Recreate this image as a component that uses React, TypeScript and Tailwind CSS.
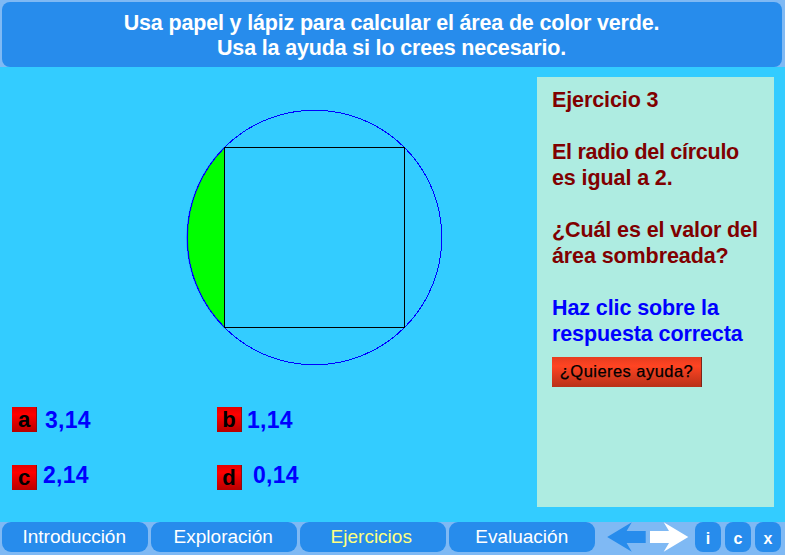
const sans = 'font-["Liberation_Sans",Arial,sans-serif]';

type Answer = { key: string; value: string; gap: string; lift: string };

const answers: Answer[] = [
  { key: 'a', value: '3,14', gap: 'pl-2', lift: 'pt-0.5' },
  { key: 'b', value: '1,14', gap: 'pl-[5px]', lift: 'pt-0.5' },
  { key: 'c', value: '2,14', gap: 'pl-1.5', lift: 'pb-1' },
  { key: 'd', value: '0,14', gap: 'pl-[11px]', lift: 'pb-1' },
];

const tabs = [
  { label: 'Introducción', look: 'text-white pr-px' },
  { label: 'Exploración', look: 'text-white pr-px' },
  { label: 'Ejercicios', look: 'text-[#ffff80] pr-[3px]' },
  { label: 'Evaluación', look: 'text-white' },
];

function Figure() {
  return (
    <svg className="mt-[40px] ml-[184px] block" width="262" height="262" viewBox="184 107 262 262">
      <path d="M224.5 147.5 A127.3 127.3 0 0 0 224.5 327.5 Z" fill="#00ff00" />
      <path d="M224.5 147.5 A127.3 127.3 0 0 0 224.5 327.5" fill="none" stroke="#0000ff" strokeOpacity="0.5" strokeWidth="1.6" />
      <circle cx="314.5" cy="237.5" r="127.3" fill="none" stroke="#0000ff" strokeWidth="1" shapeRendering="crispEdges" />
      <rect x="224.5" y="147.5" width="180" height="180" fill="none" stroke="#000" shapeRendering="crispEdges" />
    </svg>
  );
}

function AnswerRow({ items }: { items: Answer[] }) {
  return (
    <div className="flex h-[25px]">
      {items.map((a) => (
        <div key={a.key} className="flex w-[205px] items-center">
          <button className="flex h-[25px] w-[25px] items-center justify-center border-r border-[#8b0f14] bg-linear-to-b from-[#e40000] via-[#ff0000] via-30% to-[#b80000] text-[22px] leading-none font-bold text-black">
            {a.key}
          </button>
          <span className={`text-[23px] leading-none font-bold tracking-[0.3px] text-[#0000ff] ${a.gap} ${a.lift}`}>{a.value}</span>
        </div>
      ))}
    </div>
  );
}

export default function App() {
  return (
    <div className={`flex h-[555px] w-[785px] flex-col overflow-hidden bg-[#33ccff] ${sans}`}>
      <header className="h-[67px] bg-[#7fb9f4] pt-0.5 pr-[3px] pl-0.5">
        <div className="h-[65px] rounded-lg bg-[#278cec] pt-[9px] pr-px text-center text-[21.5px] leading-[25px] font-bold tracking-[-0.17px] text-white">
          <p className="whitespace-nowrap">Usa papel y lápiz para calcular el área de color verde.</p>
          <p className="whitespace-nowrap">Usa la ayuda si lo crees necesario.</p>
        </div>
      </header>

      <main className="flex h-[455px]">
        <section className="w-[537px]">
          <Figure />
          <div className="mt-[38px] flex flex-col gap-[33px] pl-3">
            <AnswerRow items={answers.slice(0, 2)} />
            <AnswerRow items={answers.slice(2)} />
          </div>
        </section>
        <aside className="mt-2.5 h-[430px] w-[237px] bg-[#aeece1] pt-[10px] pl-[15px] text-[21.5px] leading-[26px] font-bold tracking-[-0.1px] whitespace-nowrap text-[#800000]">
          <p>Ejercicio 3</p>
          <p className="mt-[26px]"><span className="tracking-[-0.27px]">El radio del círculo</span><br />es igual a 2.</p>
          <p className="mt-[26px]">¿Cuál es el valor del<br />área sombreada?</p>
          <p className="mt-[26px] text-[#0000ff]">Haz clic sobre la<br />respuesta correcta</p>
          <button className="mt-[10px] flex h-[30px] w-[150px] items-center justify-center border-r border-[#7d2418] bg-linear-to-b from-[#e63d20] via-[#ff4422] via-30% to-[#b83119] pb-0.5 text-[16.5px] leading-none font-normal tracking-[0.45px] text-black [-webkit-text-stroke:0.25px_black]">
            ¿Quieres ayuda?
          </button>
        </aside>
      </main>

      <nav className="flex h-[33px] bg-[#7fb9f4] pl-0.5">
        <div className="flex gap-[3.5px]">
          {tabs.map((t) => (
            <button key={t.label} className={`h-[30px] w-[145.5px] rounded-[9px] bg-[#278cec] text-[19px] leading-[30px] ${t.look}`}>
              {t.label}
            </button>
          ))}
        </div>
        <svg className="ml-[12.5px]" width="82" height="30" viewBox="607 0 82 30">
          <path d="M607.2 15 L631.8 .3 L626.6 9 H645.7 V21 H626.6 L631.8 29.7 Z" fill="#278cec" />
          <path d="M688.3 15 L663.7 .3 L669 9 H650 V21 H669 L663.7 29.7 Z" fill="#fff" />
        </svg>
        <div className="ml-1.5 flex gap-1">
          {['i', 'c', 'x'].map((k) => (
            <button key={k} className="h-[30px] w-[26px] rounded-lg bg-[#278cec] pt-1 text-[16px] leading-[26px] font-bold text-white">
              {k}
            </button>
          ))}
        </div>
      </nav>
    </div>
  );
}
